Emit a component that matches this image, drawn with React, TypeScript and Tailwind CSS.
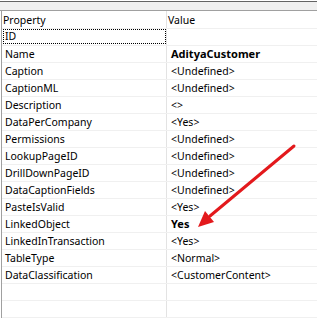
const rows: { name: string; value: string; bold?: boolean }[] = [
  { name: "Name", value: "AdityaCustomer", bold: true },
  { name: "Caption", value: "<Undefined>" },
  { name: "CaptionML", value: "<Undefined>" },
  { name: "Description", value: "<>" },
  { name: "DataPerCompany", value: "<Yes>" },
  { name: "Permissions", value: "<Undefined>" },
  { name: "LookupPageID", value: "<Undefined>" },
  { name: "DrillDownPageID", value: "<Undefined>" },
  { name: "DataCaptionFields", value: "<Undefined>" },
  { name: "PasteIsValid", value: "<Yes>" },
  { name: "LinkedObject", value: "Yes", bold: true },
  { name: "LinkedInTransaction", value: "<Yes>" },
  { name: "TableType", value: "<Normal>" },
  { name: "DataClassification", value: "<CustomerContent>" },
  { name: "", value: "" },
  { name: "", value: "" },
];

const Arrow = () => (
  <svg
    className="pointer-events-none absolute left-0 top-0"
    width="317"
    height="321"
    viewBox="0 0 317 321"
  >
    <line x1="294" y1="146" x2="210" y2="216" stroke="#e3191c" strokeWidth="3" strokeLinecap="round" />
    <polygon points="198,227 205,211 214,222" fill="#e3191c" />
  </svg>
);

export default function App() {
  return (
    <div
      className="relative h-[321px] w-[317px] overflow-hidden bg-white text-[10.5px] text-black"
      style={{ fontFamily: '"Noto Sans", "Open Sans", sans-serif' }}
    >
      <div className="mt-px h-[10px] border-t border-b border-t-[#646464] border-b-[#a0a0a0] bg-[#f0f0f0]" />
      <div className="ml-px border-l border-[#a0a0a0]">
        <div className="flex h-[18px] border-b border-[#f0f0f0]">
          <div className="w-[165px] shrink-0 border-r border-[#e3e3e3] pl-px leading-[19px]">Property</div>
          <div className="pl-px leading-[19px]">Value</div>
        </div>
        <div className="flex h-[17px] border-b border-[#f0f0f0]">
          <div className="w-[165px] shrink-0 border-r border-[#e3e3e3] pl-px">
            <div className="h-[15px] w-[163px] border border-dotted border-black pl-px leading-[13px]">ID</div>
          </div>
          <div />
        </div>
        {rows.map((r, i) => (
          <div key={i} className="flex h-[17px] border-b border-[#f0f0f0] leading-[16px]">
            <div className="w-[165px] shrink-0 border-r border-[#e3e3e3] pl-[3px]">{r.name}</div>
            <div className={"pl-1 " + (r.bold ? "text-[11px] font-bold" : "")}>{r.value}</div>
          </div>
        ))}
      </div>
      <Arrow />
    </div>
  );
}
